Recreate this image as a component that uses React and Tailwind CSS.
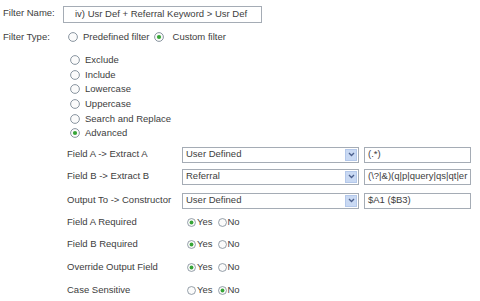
const Radio = ({ checked, className = 'w-[10px] h-[10px]' }) => (
  <svg viewBox="0 0 10 10" className={`shrink-0 ${className}`}>
    <circle cx="5" cy="5" r="4.4" fill="#fbfbfb" stroke="#7d8a96" strokeWidth="0.9" />
    {checked && <circle cx="5" cy="5" r="2.1" fill="#37a537" />}
  </svg>
);

const Select = ({ value }) => (
  <div className="w-[177px] h-[16px] border border-[#a5acb5] bg-white flex items-center justify-between pl-[3px] pr-px">
    <span>{value}</span>
    <span className="w-[12px] h-[12px] bg-[#c9d9f3] border border-[#b4c8ea] flex items-center justify-center">
      <svg viewBox="0 0 8 6" className="w-[7px] h-[5px]">
        <path d="M1 1.2 L4 4.2 L7 1.2" fill="none" stroke="#4b5f8c" strokeWidth="1.6" />
      </svg>
    </span>
  </div>
);

const TextBox = ({ value }) => (
  <div className="w-[107px] h-[16px] border border-[#a5acb5] bg-white flex items-center pl-[3px] overflow-hidden whitespace-nowrap">
    {value}
  </div>
);

const fieldRows = [
  { label: 'Field A -> Extract A', select: 'User Defined', text: '(.*)', mt: 'mt-[6px]' },
  { label: 'Field B -> Extract B', select: 'Referral', text: '(\\?|&)(q|p|query|qs|qt|er', mt: 'mt-[6px]' },
  { label: 'Output To -> Constructor', select: 'User Defined', text: '$A1 ($B3)', mt: 'mt-[8px]' },
];

const yesNoRows = [
  { label: 'Field A Required', yes: true, mt: 'mt-[7px]' },
  { label: 'Field B Required', yes: true, mt: 'mt-[8px]' },
  { label: 'Override Output Field', yes: true, mt: 'mt-[9px]' },
  { label: 'Case Sensitive', yes: false, mt: 'mt-[9px]' },
];

const types = ['Exclude', 'Include', 'Lowercase', 'Uppercase', 'Search and Replace', 'Advanced'];

export default function App() {
  return (
    <div className="w-[480px] h-[301px] overflow-hidden bg-white text-[#3d3d3d] text-[9.5px] font-['Liberation_Sans',Arial,sans-serif] pl-[3px] pt-[6px]">
      <div className="flex items-center h-[17px]">
        <span className="w-[60px] -mt-[2px]">Filter Name:</span>
        <div className="w-[199px] h-[17px] border border-[#a5acb5] flex items-center pl-[11px]">
          iv) Usr Def + Referral Keyword &gt; Usr Def
        </div>
      </div>

      <div className="flex items-center h-[14px] mt-[7px]">
        <span className="w-[65px]">Filter Type:</span>
        <Radio />
        <span className="ml-[5px]">Predefined filter</span>
        <span className="ml-[4px]"><Radio checked /></span>
        <span className="ml-[9px]">Custom filter</span>
      </div>

      <div className="flex flex-col mt-[9px] pl-[67px]">
        {types.map((t) => (
          <div key={t} className="flex items-center h-[14.6px]">
            <Radio checked={t === 'Advanced'} />
            <span className="ml-[5px]">{t}</span>
          </div>
        ))}
      </div>

      <div className="flex flex-col pl-[64px]">
        {fieldRows.map((r) => (
          <div key={r.label} className={`flex items-center h-[16px] ${r.mt}`}>
            <span className="w-[115px]">{r.label}</span>
            <Select value={r.select} />
            <span className="ml-[5px]"><TextBox value={r.text} /></span>
          </div>
        ))}
        {yesNoRows.map((r) => (
          <div key={r.label} className={`flex items-center h-[14px] ${r.mt}`}>
            <span className="w-[120px]">{r.label}</span>
            <Radio checked={r.yes} className="w-[9px] h-[9px]" />
            <span className="ml-px">Yes</span>
            <span className="ml-[5px]"><Radio checked={!r.yes} className="w-[9px] h-[9px]" /></span>
            <span className="ml-px">No</span>
          </div>
        ))}
      </div>
    </div>
  );
}
